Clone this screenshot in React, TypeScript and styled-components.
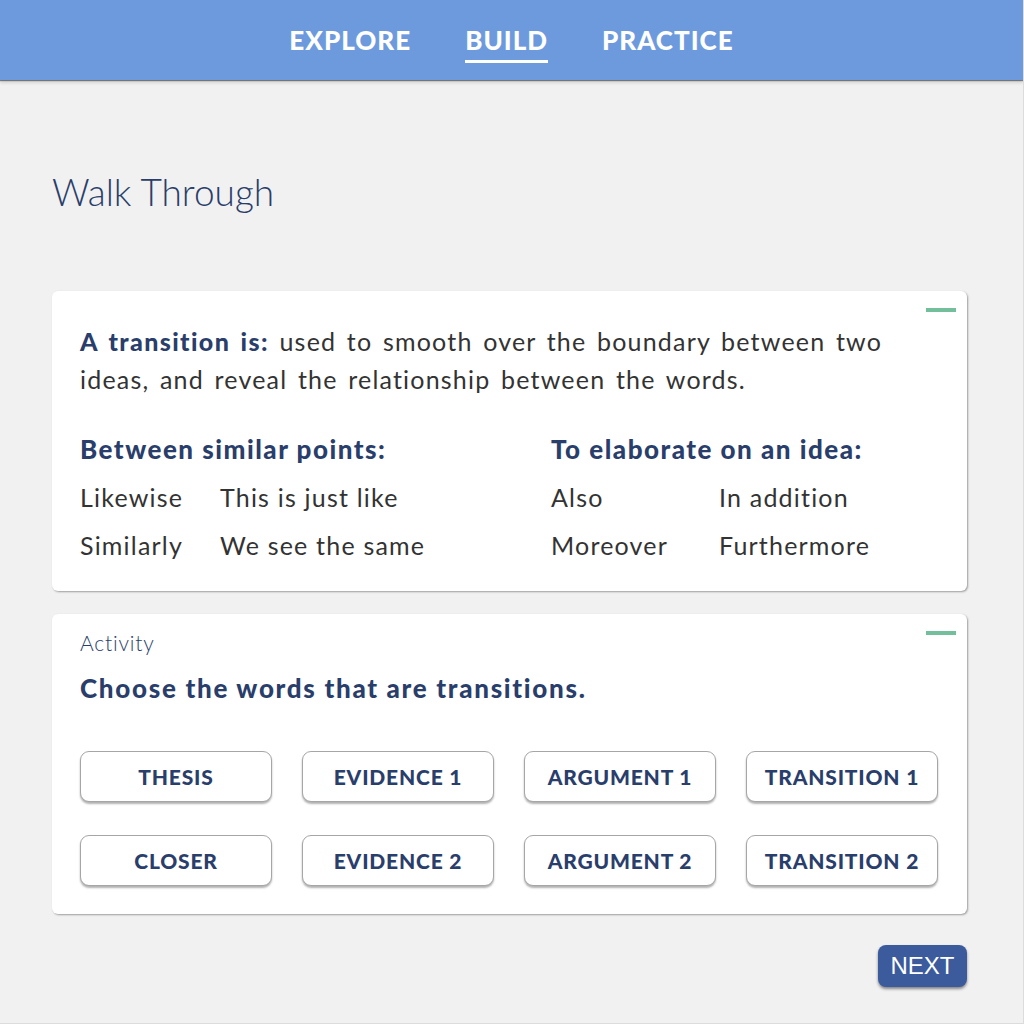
import React from 'react';
import styled, {createGlobalStyle} from 'styled-components';

const GlobalStyle = createGlobalStyle`
  html, body {
    margin: 0;
    padding: 0;
    background: #f1f1f1;
  }
  * {
    box-sizing: border-box;
  }
`;

const navy = '#2a3e6b';

const Page = styled.div`
  width: 1024px;
  height: 1024px;
  background: #f1f1f1;
  font-family: Lato, 'Noto Sans', sans-serif;
  border-right: 1px solid #dcdcdc;
  border-bottom: 1px solid #dcdcdc;
  overflow: hidden;
`;

const Header = styled.header`
  height: 80px;
  background: #6d9add;
  box-shadow: 0 1px 1px rgba(0, 0, 0, 0.45), 0 3px 3px rgba(0, 0, 0, 0.12);
  display: flex;
  justify-content: center;
  align-items: flex-start;
  gap: 54px;
  padding-top: 24px;
`;

const NavItem = styled.a<{active?: boolean}>`
  color: #fff;
  font-weight: 900;
  font-size: 26px;
  letter-spacing: 1px;
  line-height: 32px;
  padding-bottom: 4px;
  text-decoration: none;
  border-bottom: 3px solid ${(p) => (p.active ? '#fff' : 'transparent')};
`;

const Main = styled.main`
  padding: 0 56px 0 52px;
  display: flex;
  flex-direction: column;
`;

const Title = styled.h1`
  margin: 90px 0 0;
  font-weight: 300;
  font-size: 37px;
  line-height: 44px;
  color: ${navy};
`;

const Card = styled.section<{gap: number}>`
  position: relative;
  margin-top: ${(p) => p.gap}px;
  background: #fff;
  border-radius: 6px;
  box-shadow: 1px 1px 2px rgba(0, 0, 0, 0.35);
  height: 300px;
  padding: 0 28px;
`;

const Dash = styled.span`
  position: absolute;
  top: 17px;
  right: 11px;
  width: 30px;
  height: 4px;
  background: #73bf9c;
`;

const Intro = styled.p`
  margin: 31px 0 0;
  font-size: 25px;
  letter-spacing: 1.2px;
  word-spacing: 3px;
  line-height: 38px;
  color: #333;
`;

const Strong = styled.strong`
  color: ${navy};
  font-weight: 900;
  letter-spacing: 1.4px;
`;

const Groups = styled.div`
  display: flex;
  margin-top: 27px;
`;

const Group = styled.div`
  flex: 0 0 471px;
`;

const GroupTitle = styled.h3`
  margin: 0;
  font-size: 26px;
  letter-spacing: 1.5px;
  line-height: 48px;
  font-weight: 900;
  color: ${navy};
`;

const TermGrid = styled.div<{first: number}>`
  display: grid;
  grid-template-columns: ${(p) => p.first}px auto;
`;

const Term = styled.span`
  font-size: 25px;
  letter-spacing: 1.2px;
  line-height: 48px;
  color: #333;
`;

const Label = styled.div`
  margin-top: 15px;
  font-size: 21px;
  font-weight: 300;
  letter-spacing: 0.8px;
  line-height: 28px;
  color: ${navy};
`;

const Prompt = styled.h2`
  margin: 15px 0 0;
  font-size: 26px;
  letter-spacing: 1.7px;
  line-height: 32px;
  font-weight: 900;
  color: ${navy};
`;

const Choices = styled.div`
  margin-top: 47px;
  width: 858px;
  display: grid;
  grid-template-columns: repeat(4, 1fr);
  column-gap: 30px;
  row-gap: 33px;
`;

const Choice = styled.button`
  height: 51px;
  background: #fff;
  border: 1px solid #a6a6a6;
  border-radius: 9px;
  box-shadow: 0 2px 2px rgba(0, 0, 0, 0.3);
  font-family: inherit;
  font-size: 21px;
  font-weight: 900;
  letter-spacing: 0.8px;
  color: ${navy};
`;

const Footer = styled.div`
  display: flex;
  justify-content: flex-end;
  margin-top: 31px;
`;

const NextButton = styled.button`
  width: 89px;
  height: 42px;
  background: #3b5b9d;
  color: #fff;
  border: none;
  border-radius: 8px;
  box-shadow: 0 2px 3px rgba(0, 0, 0, 0.45);
  font-family: 'Liberation Sans', Arial, sans-serif;
  font-size: 24px;
`;

const similar = [
  ['Likewise', 'This is just like'],
  ['Similarly', 'We see the same'],
];

const elaborate = [
  ['Also', 'In addition'],
  ['Moreover', 'Furthermore'],
];

const choices = [
  'THESIS',
  'EVIDENCE 1',
  'ARGUMENT 1',
  'TRANSITION 1',
  'CLOSER',
  'EVIDENCE 2',
  'ARGUMENT 2',
  'TRANSITION 2',
];

function TermList({rows, first}: {rows: string[][]; first: number}) {
  return (
    <TermGrid first={first}>
      {rows.map(([a, b]) => (
        <React.Fragment key={a}>
          <Term>{a}</Term>
          <Term>{b}</Term>
        </React.Fragment>
      ))}
    </TermGrid>
  );
}

export default function App() {
  return (
    <Page>
      <GlobalStyle />
      <Header>
        <NavItem>EXPLORE</NavItem>
        <NavItem active>BUILD</NavItem>
        <NavItem>PRACTICE</NavItem>
      </Header>
      <Main>
        <Title>Walk Through</Title>
        <Card gap={77}>
          <Dash />
          <Intro>
            <Strong>A transition is:</Strong> used to smooth over the boundary
            between two ideas, and reveal the relationship between the words.
          </Intro>
          <Groups>
            <Group>
              <GroupTitle>Between similar points:</GroupTitle>
              <TermList rows={similar} first={140} />
            </Group>
            <Group>
              <GroupTitle>To elaborate on an idea:</GroupTitle>
              <TermList rows={elaborate} first={168} />
            </Group>
          </Groups>
        </Card>
        <Card gap={23}>
          <Dash />
          <Label>Activity</Label>
          <Prompt>Choose the words that are transitions.</Prompt>
          <Choices>
            {choices.map((c) => (
              <Choice key={c}>{c}</Choice>
            ))}
          </Choices>
        </Card>
        <Footer>
          <NextButton>NEXT</NextButton>
        </Footer>
      </Main>
    </Page>
  );
}
